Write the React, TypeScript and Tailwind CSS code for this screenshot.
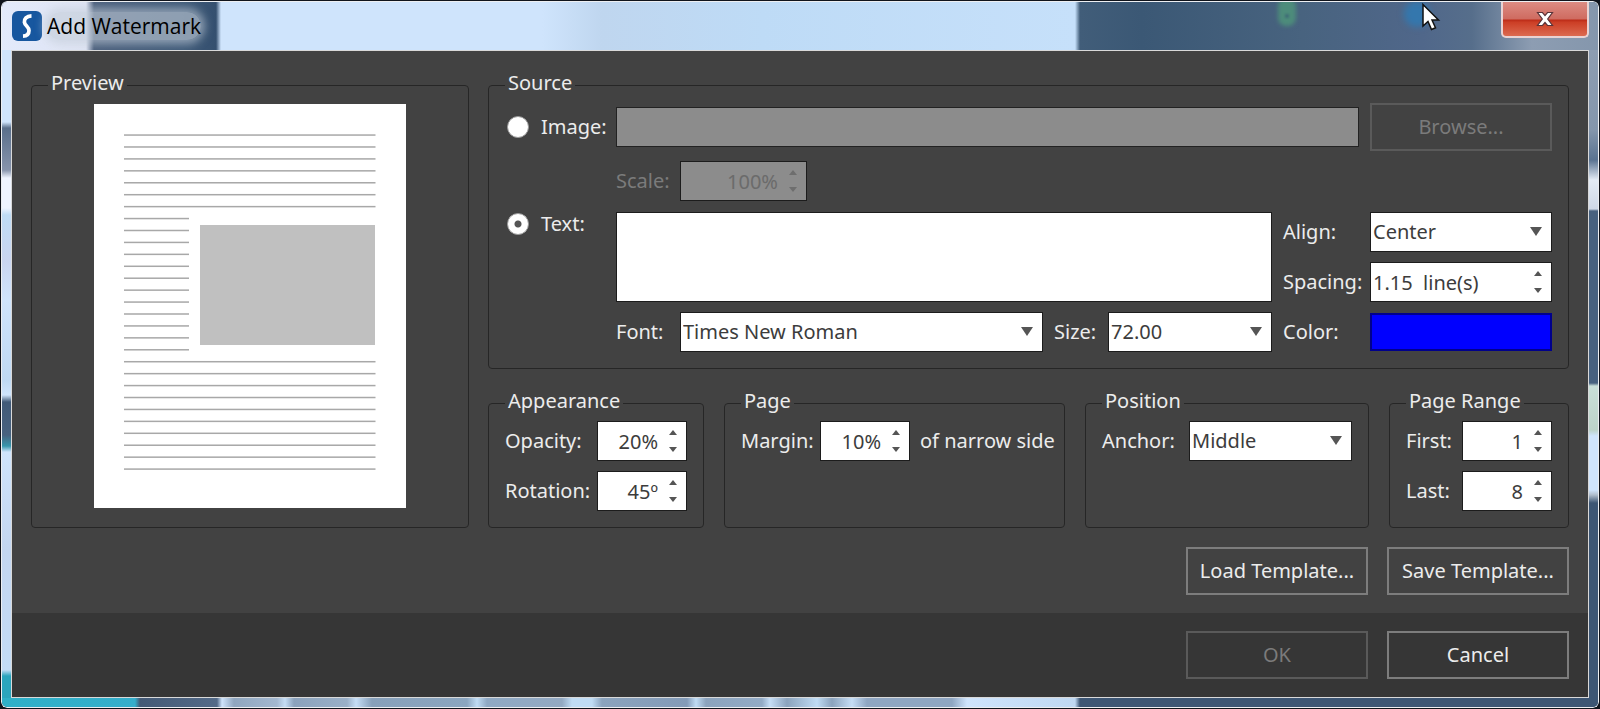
import type { ReactNode } from "react";

function Group({ title, className, children }: { title: string; className: string; children: ReactNode }) {
  return (
    <fieldset className="min-w-0 rounded-[4px] border border-[#262626] px-4 pt-1 pb-4">
      <legend className="px-[3px] pb-1 leading-6">{title}</legend>
      <div className={className}>{children}</div>
    </fieldset>
  );
}

function Spin({ id, value, align = "right", disabled = false }: { id: string; value: string; align?: "left" | "right"; disabled?: boolean }) {
  const tone = disabled ? "bg-[#8c8c8c] text-[#6b6b6b]" : "bg-white text-[#3c3c3c]";
  const side = align === "left" ? "text-left" : "text-right";
  return (
    <div className={`flex h-10 w-full min-w-0 items-center border border-[#1c1c1c] pr-2 ${tone}`}>
      <input id={id} type="text" defaultValue={value} disabled={disabled} className={`h-full w-0 min-w-0 flex-1 bg-transparent pr-[10px] pl-[2px] whitespace-pre outline-none ${side}`} />
      <div className="flex h-full flex-col justify-between py-[6px]">
        <button type="button" aria-label="Increase" disabled={disabled} className="flex h-2 items-center">
          <svg width="10" height="6" viewBox="0 0 10 6" fill={disabled ? "#6e6e6e" : "#555"}><path d="M1 6 5 1 9 6Z" /></svg>
        </button>
        <button type="button" aria-label="Decrease" disabled={disabled} className="flex h-2 items-center">
          <svg width="10" height="6" viewBox="0 0 10 6" fill={disabled ? "#6e6e6e" : "#555"}><path d="M1 0 5 5 9 0Z" /></svg>
        </button>
      </div>
    </div>
  );
}

function Dropdown({ id, options, className = "w-full" }: { id: string; options: string[]; className?: string }) {
  return (
    <div className={`grid h-10 min-w-0 items-center border border-[#1c1c1c] bg-white text-[#3c3c3c] ${className}`}>
      <select id={id} className="col-start-1 row-start-1 h-full w-full appearance-none bg-transparent pl-[2px] outline-none">
        {options.map((o) => <option key={o}>{o}</option>)}
      </select>
      <svg className="pointer-events-none col-start-1 row-start-1 mr-2 justify-self-end" width="14" height="10" viewBox="0 0 14 10" fill="#555"><path d="M1 0h12L7 9Z" /></svg>
    </div>
  );
}

function Radio({ id, label, checked = false }: { id: string; label: string; checked?: boolean }) {
  return (
    <div className="flex items-center gap-3 pl-[2px]">
      <input id={id} type="radio" name="source" defaultChecked={checked} className="size-[22px] shrink-0 appearance-none rounded-full border border-[#9a9a9a] bg-white checked:bg-[radial-gradient(circle,#555_0_3px,#fff_4px)]" />
      <label htmlFor={id}>{label}</label>
    </div>
  );
}

function PagePreview() {
  return (
    <svg width="312" height="404" viewBox="0 0 312 404" className="mt-px" role="img" aria-label="Page preview">
      <rect width="312" height="404" fill="#fff" />
      {Array.from({ length: 29 }, (_, i) => (
        <rect key={i} x="30" y={30.3 + i * 11.93} width={i > 6 && i < 19 ? 65 : 251.5} height="1.5" fill="#a8a8a8" />
      ))}
      <rect x="106" y="121" width="175" height="120" fill="#c0c0c0" />
    </svg>
  );
}

const button = "h-12 w-[182px] border-2 border-[#7d7d7d] text-center";
const buttonOff = "h-12 border-2 border-[#5a5a5a] text-center text-[#7b7b7b]";

export default function App() {
  return (
    <div className="bg-[#10141c] text-[20px] leading-6 text-[#ececec] [font-family:'Noto_Sans',sans-serif]">
      <div className="flex flex-col overflow-hidden rounded-[7px] border border-[#10141c]">
        <div className="relative flex flex-col overflow-hidden rounded-[6px] border border-white/90 bg-[#47617f]">
          <header className="flex h-12 justify-between bg-[linear-gradient(90deg,#e3eafb_0,#dfe4f3_84px,#4b5f7c_92px,#3f5a78_180px,#35506f_214px,#cfe4fc_219px,#cfe4fc_540px,#bfd6ef_600px,#bedbf6_760px,#c6e0fa_1073px,#415d79_1078px,#3b5875_1140px,#48637f_1300px,#50678a_1420px,#566e8b_1470px,#8d9db2_1530px,#8496ac_1600px)] pl-[10px]">
            <div className="flex items-center gap-[5px]">
              <svg width="30" height="30" viewBox="0 0 30 30" aria-hidden="true">
                <rect width="30" height="30" rx="6" fill="#17579f" />
                <path d="M19.500 4.800C14.500 5 12 8 12.400 11.200C12.900 14.800 17 15.500 17 19.500C17 23.200 15 25 11 25.200" fill="none" stroke="#fff" strokeWidth="3.700" />
              </svg>
              <h1 className="rounded-full bg-[#c3cdd8]/60 text-[21px] leading-7 text-black shadow-[0_0_8px_4px_rgba(195,205,216,0.6)] [font-family:'Open_Sans',sans-serif]">Add Watermark</h1>
            </div>
            <button type="button" aria-label="Close" className="mr-[9px] flex h-[36px] w-[88px] items-center justify-center rounded-b-[5px] border-2 border-t-0 border-[#e9d3d3] bg-[linear-gradient(#dc8c83_0,#cf6b60_17px,#bc2c18_18px,#cc3f26_60%,#dc6a50)]">
              <svg width="18" height="16" viewBox="0 0 18 16"><path d="M1.500 1.500h5L9 4.600l2.500-3.100h5L11.700 8l4.800 6.500h-5L9 11.400l-2.500 3.100h-5L6.300 8Z" fill="#fff" stroke="#5a3338" strokeWidth="1.200" /></svg>
            </button>
          </header>
          <svg className="pointer-events-none absolute top-0 left-[1270px]" width="180" height="34" viewBox="0 0 180 34" aria-hidden="true">
            <rect x="6" y="-4" width="18" height="28" rx="8" fill="#4d8c7b" className="blur-[2px]" />
            <rect x="13" y="12" width="4" height="4" fill="#3f6f76" className="blur-[1px]" />
            <circle cx="145" cy="12" r="13" fill="#3477ad" className="blur-[3px]" />
            <path d="M151 2.500v21.500l5-4.500 3.500 8 4-1.700-3.500-7.800h6.500Z" fill="#fff" stroke="#111" strokeWidth="1.500" />
          </svg>
          <div className="bg-[linear-gradient(#cfe4fc_0,#cfe4fc_72px,#5a6f8b_78px,#8794ac_120px,#eef4ff_128px,#eef4ff_158px,#bfdcf5_165px,#c9d5f0_210px,#cfe4fc_250px,#bfd9f3_330px,#cfe4fc_345px,#415a78_352px,#48627f_385px,#3796ac_396px,#cfe4fc_402px,#c3d6f0_500px,#c3dcf6_620px,#2ba5bd_626px)]">
            <div className="bg-[linear-gradient(#8d9db2_0,#8496ac_80px,#5a7391_110px,#e3ebf5_130px,#cfd8e6_159px,#47617f_161px,#47617f_333px,#c9dfd8_336px,#bcd3c9_380px,#cfe4fc_386px,#cfe4fc_440px,#aebccb_445px,#3d5674_453px,#3d5674_640px)] bg-[length:11px_100%] bg-right bg-no-repeat px-[9px]">
              <main className="border border-white/80 bg-[#424242]">
                <div className="flex flex-col gap-[19px] px-[19px] pt-5 pb-[18px]">
                  <div className="flex items-stretch gap-[19px]">
                    <div className="grid w-[438px] shrink-0">
                      <Group title="Preview" className="flex justify-center"><PagePreview /></Group>
                    </div>
                    <div className="flex min-w-0 flex-1 flex-col gap-5">
                      <Group title="Source" className="grid grid-cols-[100px_1fr_76px_182px] grid-rows-[48px_41px_40px_40px_40px] items-center gap-x-[11px] gap-y-[10px]">
                        <Radio id="src-image" label="Image:" />
                        <input aria-label="Image file" disabled className="col-span-2 h-10 min-w-0 border border-[#222] bg-[#8c8c8c]" />
                        <button type="button" disabled className={buttonOff}>Browse...</button>
                        <div className="col-start-2 row-start-2 flex items-center self-start text-[#7b7b7b]">
                          <label htmlFor="scale" className="w-16">Scale:</label>
                          <div className="w-[127px]"><Spin id="scale" value="100%" disabled /></div>
                        </div>
                        <div className="col-start-1 row-start-3 self-start"><Radio id="src-text" label="Text:" checked /></div>
                        <textarea aria-label="Watermark text" className="col-start-2 row-span-2 row-start-3 h-full w-full resize-none border border-[#1c1c1c] bg-white p-1 text-[#3c3c3c] outline-none" />
                        <label htmlFor="align" className="col-start-3 row-start-3">Align:</label>
                        <div className="col-start-4 row-start-3"><Dropdown id="align" options={["Center", "Left", "Right"]} /></div>
                        <label htmlFor="spacing" className="col-start-3 row-start-4">Spacing:</label>
                        <div className="col-start-4 row-start-4"><Spin id="spacing" value="1.15  line(s)" align="left" /></div>
                        <div className="col-start-2 row-start-5 flex min-w-0 items-center">
                          <label htmlFor="font" className="w-16 shrink-0">Font:</label>
                          <Dropdown id="font" options={["Times New Roman", "Arial"]} className="flex-1" />
                          <label htmlFor="size" className="w-[65px] shrink-0 pl-[11px]">Size:</label>
                          <Dropdown id="size" options={["72.00", "36.00"]} className="w-[164px] shrink-0" />
                        </div>
                        <label htmlFor="color" className="col-start-3 row-start-5">Color:</label>
                        <button id="color" type="button" aria-label="Color" className="col-start-4 row-start-5 h-[38px] border-2 border-[#00008c] bg-[#0000ff]" />
                      </Group>
                      <div className="grid grid-cols-[216px_341px_1fr_180px] gap-5">
                        <Group title="Appearance" className="grid grid-cols-[1fr_90px] items-center gap-y-[10px]">
                          <label htmlFor="opacity">Opacity:</label>
                          <Spin id="opacity" value="20%" />
                          <label htmlFor="rotation">Rotation:</label>
                          <Spin id="rotation" value="45º" />
                        </Group>
                        <Group title="Page" className="flex items-center whitespace-nowrap">
                          <label htmlFor="margin" className="w-[79px] shrink-0">Margin:</label>
                          <div className="w-[90px] shrink-0"><Spin id="margin" value="10%" /></div>
                          <span className="pl-[10px]">of narrow side</span>
                        </Group>
                        <Group title="Position" className="flex items-center">
                          <label htmlFor="anchor" className="w-[87px] shrink-0">Anchor:</label>
                          <Dropdown id="anchor" options={["Middle", "Top", "Bottom"]} className="flex-1" />
                        </Group>
                        <Group title="Page Range" className="grid grid-cols-[1fr_90px] items-center gap-y-[10px]">
                          <label htmlFor="first">First:</label>
                          <Spin id="first" value="1" />
                          <label htmlFor="last">Last:</label>
                          <Spin id="last" value="8" />
                        </Group>
                      </div>
                    </div>
                  </div>
                  <div className="flex justify-end gap-[19px]">
                    <button type="button" className={button}>Load Template...</button>
                    <button type="button" className={button}>Save Template...</button>
                  </div>
                </div>
                <footer className="flex justify-end gap-[19px] bg-[#363636] px-[19px] py-[18px]">
                  <button type="button" disabled className={`w-[182px] ${buttonOff}`}>OK</button>
                  <button type="button" className={button}>Cancel</button>
                </footer>
              </main>
            </div>
          </div>
          <div className="h-[9px] bg-[linear-gradient(90deg,#2fb0c8_0,#35aecb_133px,#445a76_138px,#536a88_215px,#cfe4fc_220px,#8fa6bf_232px,#a3b8d0_275px,#c6def6_283px,#8ba2bc_292px,#9ab0c8_345px,#c6def6_354px,#87a0ba_370px,#8ba6c0_465px,#c0dcf4_475px,#8fa9c4_485px,#93a9c2_560px,#c0dcf4_570px,#c0dcf4_590px,#8ba3bd_600px,#839bb8_685px,#c0dcf4_694px,#8ba3bd_704px,#93abc6_760px,#c6def6_768px,#8ba3bd_785px,#c0dcf4_815px,#8ba3bd_830px,#c6def6_850px,#8fa6c2_865px,#8fa6c2_950px,#cfe4fc_965px,#bfd8f2_1073px,#3d5674_1078px,#3d5674_1600px)]" />
        </div>
      </div>
    </div>
  );
}
